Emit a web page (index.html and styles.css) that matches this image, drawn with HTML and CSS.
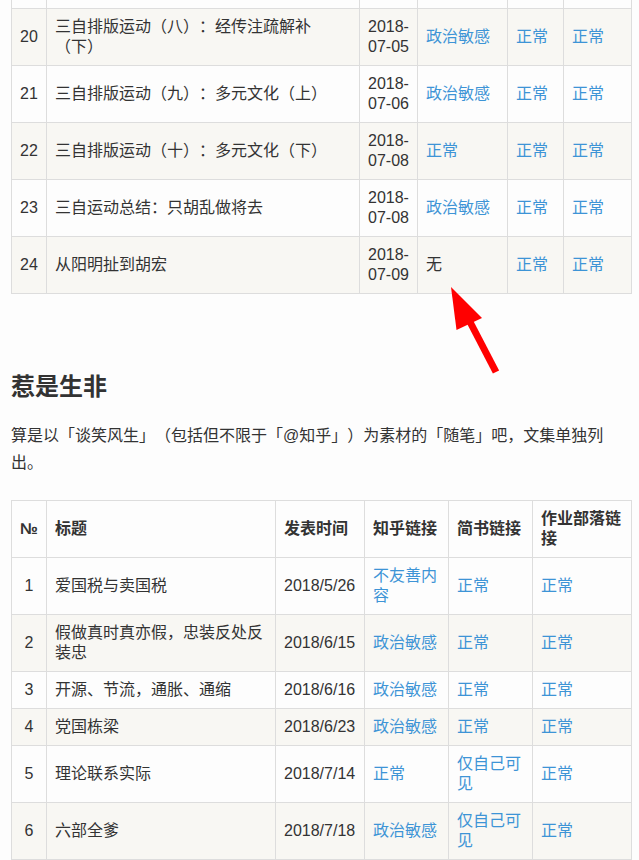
FILE: index.html
```html
<!DOCTYPE html>
<html lang="zh-CN">
<head>
<meta charset="utf-8">
<title>惹是生非</title>
<link rel="stylesheet" href="styles.css">
</head>
<body>
<main class="page">
  <table class="grid grid-a">
    <colgroup>
      <col class="a-no"><col class="a-title"><col class="a-date"><col class="a-zh"><col class="a-js"><col class="a-zy">
    </colgroup>
    <tbody>
      <tr class="cut"><td class="no"></td><td></td><td></td><td></td><td></td><td></td></tr>
      <tr><td class="no">20</td><td>三自排版运动（八）：经传注疏解补（下）</td><td>2018-07-05</td><td><a>政治敏感</a></td><td><a>正常</a></td><td><a>正常</a></td></tr>
      <tr><td class="no">21</td><td>三自排版运动（九）：多元文化（上）</td><td>2018-07-06</td><td><a>政治敏感</a></td><td><a>正常</a></td><td><a>正常</a></td></tr>
      <tr><td class="no">22</td><td>三自排版运动（十）：多元文化（下）</td><td>2018-07-08</td><td><a>正常</a></td><td><a>正常</a></td><td><a>正常</a></td></tr>
      <tr><td class="no">23</td><td>三自运动总结：只胡乱做将去</td><td>2018-07-08</td><td><a>政治敏感</a></td><td><a>正常</a></td><td><a>正常</a></td></tr>
      <tr><td class="no">24</td><td>从阳明扯到胡宏</td><td>2018-07-09</td><td>无</td><td><a>正常</a></td><td><a>正常</a></td></tr>
    </tbody>
  </table>

  <h2 class="section-title">惹是生非</h2>
  <p class="intro">算是以「谈笑风生」（包括但不限于「@知乎」）为素材的「随笔」吧，文集单独列出。</p>

  <table class="grid grid-b">
    <colgroup>
      <col class="b-no"><col class="b-title"><col class="b-date"><col class="b-zh"><col class="b-js"><col class="b-zy">
    </colgroup>
    <thead>
      <tr><th class="no">№</th><th>标题</th><th>发表时间</th><th>知乎链接</th><th>简书链接</th><th>作业部落链接</th></tr>
    </thead>
    <tbody>
      <tr><td class="no">1</td><td>爱国税与卖国税</td><td>2018/5/26</td><td><a>不友善内容</a></td><td><a>正常</a></td><td><a>正常</a></td></tr>
      <tr><td class="no">2</td><td>假做真时真亦假，忠装反处反装忠</td><td>2018/6/15</td><td><a>政治敏感</a></td><td><a>正常</a></td><td><a>正常</a></td></tr>
      <tr><td class="no">3</td><td>开源、节流，通胀、通缩</td><td>2018/6/16</td><td><a>政治敏感</a></td><td><a>正常</a></td><td><a>正常</a></td></tr>
      <tr><td class="no">4</td><td>党国栋梁</td><td>2018/6/23</td><td><a>政治敏感</a></td><td><a>正常</a></td><td><a>正常</a></td></tr>
      <tr><td class="no">5</td><td>理论联系实际</td><td>2018/7/14</td><td><a>正常</a></td><td><a>仅自己可见</a></td><td><a>正常</a></td></tr>
      <tr><td class="no">6</td><td>六部全爹</td><td>2018/7/18</td><td><a>政治敏感</a></td><td><a>仅自己可见</a></td><td><a>正常</a></td></tr>
    </tbody>
  </table>
</main>

<svg class="arrow" width="70" height="100" viewBox="0 0 70 100" aria-hidden="true">
  <line x1="56" y1="92" x2="29" y2="40" stroke="#ff0000" stroke-width="7"/>
  <polygon points="11,7 16.5,50 42,38" fill="#ff0000"/>
</svg>
</body>
</html>
```

FILE: styles.css
```css
html, body {
  margin: 0;
  padding: 0;
  background: #fdfdfd;
}

body {
  position: relative;
  font-family: "Liberation Sans", "Noto Sans CJK SC", sans-serif;
  font-size: 16px;
  color: #333;
  text-spacing-trim: space-all;
}

.page {
  width: 620px;
  margin-left: 11px;
  margin-top: -49px;
}

.grid {
  width: 620px;
  border-collapse: collapse;
  table-layout: fixed;
  line-height: 20px;
}

.grid td,
.grid th {
  border: 1px solid #ddd;
  padding: 8px 8px;
  vertical-align: middle;
  text-align: left;
}

.grid th {
  font-weight: bold;
  color: #333;
}

.grid .no {
  text-align: center;
  padding-left: 4px;
  padding-right: 4px;
}

.grid tbody tr:nth-child(even) {
  background: #f8f7f3;
}

.grid a {
  color: #3d94d6;
  text-decoration: none;
}

.cut td {
  height: 40px;
}

.a-no { width: 35px; }
.a-title { width: 313px; }
.a-date { width: 58px; }
.a-zh { width: 90px; }
.a-js { width: 56px; }
.a-zy { width: 68px; }

.b-no { width: 35px; }
.b-title { width: 229px; }
.b-date { width: 89px; }
.b-zh { width: 84px; }
.b-js { width: 84px; }
.b-zy { width: 99px; }

.section-title {
  font-size: 24px;
  font-weight: bold;
  line-height: 29px;
  color: #333;
  margin: 78px 0 0 0;
}

.intro {
  line-height: 27px;
  margin: 21px 0 24px 0;
}

.arrow {
  position: absolute;
  left: 440px;
  top: 280px;
}
```
